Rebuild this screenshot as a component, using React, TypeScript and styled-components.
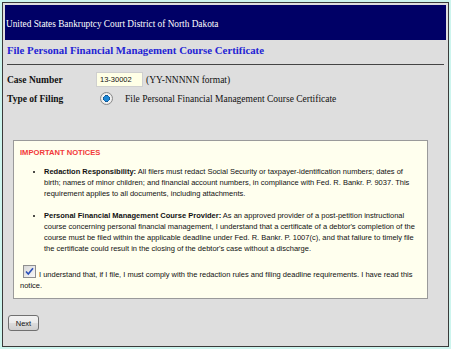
import React from "react";
import styled, { createGlobalStyle } from "styled-components";

const Global = createGlobalStyle`
  html, body { margin: 0; padding: 0; }
  body { background: #cdf5ee; width: 451px; height: 349px; overflow: hidden; }
`;

const Frame = styled.div`
  margin: 2px;
  border: 1px solid #3a3a3a;
  background: #dedede;
  padding: 2px 2px 0 2px;
  box-sizing: border-box;
  width: 447px;
  height: 345px;
  display: flex;
  flex-direction: column;
`;

const Header = styled.div`
  height: 35px;
  background: #000066;
  color: #fff;
  font-family: "Liberation Serif", serif;
  font-size: 9.3px;
  display: flex;
  align-items: center;
  padding-left: 1px;
  padding-top: 3px;
  box-sizing: border-box;
`;

const Title = styled.h1`
  margin: 3px 0 0 2px;
  font-family: "Liberation Serif", serif;
  font-size: 10.8px;
  font-weight: bold;
  color: #2424d4;
  line-height: 14px;
`;

const Rule = styled.hr`
  margin: 7px 2px 0 2px;
  border: none;
  border-top: 1px solid #444;
  height: 0;
`;

const FormGrid = styled.div`
  display: grid;
  grid-template-columns: 89px 1fr;
  row-gap: 5px;
  margin: 7px 0 0 2px;
  font-family: "Liberation Serif", serif;
  font-size: 9.5px;
  align-items: center;
`;

const Label = styled.div`
  font-weight: bold;
  color: #111;
`;

const Field = styled.div`
  display: flex;
  align-items: center;
  gap: 3px;
  color: #111;
`;

const TextInput = styled.div`
  width: 47px;
  height: 15px;
  box-sizing: border-box;
  background: #ffffe6;
  border: 1px solid #cfcfcf;
  font-family: "Liberation Sans", sans-serif;
  font-size: 7.5px;
  line-height: 13px;
  padding-left: 3px;
  color: #111;
`;

const Radio = styled.span`
  width: 11px;
  height: 11px;
  border-radius: 50%;
  border: 1px solid #8a8a8a;
  background: radial-gradient(circle, #1e88d6 0 2.6px, #0d4f8a 3.2px, #f4f4f4 3.6px, #dcdcdc 100%);
  margin: 0 9px 0 4px;
  flex: none;
`;

const Notice = styled.div`
  margin: 35px 18px 0 8px;
  background: #ffffee;
  border: 1px solid #9a9a9a;
  padding: 6px 9px 7px 6px;
  font-family: "Liberation Sans", sans-serif;
  font-size: 7.5px;
  line-height: 11px;
  color: #111;
`;

const NoticeHead = styled.div`
  color: #f23a3a;
  font-weight: bold;
  font-size: 7.6px;
`;

const List = styled.ul`
  margin: 8px 0 0 0;
  padding-left: 24px;
  list-style: disc;
`;

const Item = styled.li`
  margin-bottom: 11px;
`;

const Agree = styled.div`
  margin-top: 0;
`;

const Check = styled.span`
  display: inline-block;
  width: 11px;
  height: 11px;
  border: 1px solid #8f8f8f;
  background: linear-gradient(135deg, #d8d8d8, #f8f8f8);
  vertical-align: -1px;
  margin: 0 3px 0 3px;
  position: relative;
`;

const Next = styled.button`
  margin: 16px 0 0 3px;
  align-self: flex-start;
  width: 31px;
  height: 16px;
  border: 1px solid #707070;
  border-radius: 3px;
  background: linear-gradient(#f2f2f2, #ebebeb 50%, #dddddd 50%, #cfcfcf);
  font-family: "Liberation Sans", sans-serif;
  font-size: 7.5px;
  color: #111;
  padding: 0;
`;

export default function App() {
  return (
    <>
      <Global />
      <Frame>
        <Header>United States Bankruptcy Court District of North Dakota</Header>
        <Title>File Personal Financial Management Course Certificate</Title>
        <Rule />
        <FormGrid>
          <Label>Case Number</Label>
          <Field>
            <TextInput>13-30002</TextInput>
            <span>(YY-NNNNN format)</span>
          </Field>
          <Label>Type of Filing</Label>
          <Field>
            <Radio />
            <span>File Personal Financial Management Course Certificate</span>
          </Field>
        </FormGrid>
        <Notice>
          <NoticeHead>IMPORTANT NOTICES</NoticeHead>
          <List>
            <Item>
              <b>Redaction Responsibility:</b> All filers must redact Social Security or taxpayer-identification numbers; dates of birth; names of minor children; and financial account numbers, in compliance with Fed. R. Bankr. P. 9037. This requirement applies to all documents, including attachments.
            </Item>
            <Item>
              <b>Personal Financial Management Course Provider:</b> As an approved provider of a post-petition instructional course concerning personal financial management, I understand that a certificate of a debtor's completion of the course must be filed within the applicable deadline under Fed. R. Bankr. P. 1007(c), and that failure to timely file the certificate could result in the closing of the debtor's case without a discharge.
            </Item>
          </List>
          <Agree>
            <Check>
              <svg width="11" height="11" viewBox="0 0 11 11" style={{ position: "absolute", left: 0, top: 0 }}>
                <path d="M2 5.5 L4.3 8 L9 2.2" fill="none" stroke="#2a4fb8" strokeWidth="1.6" />
              </svg>
            </Check>
            I understand that, if I file, I must comply with the redaction rules and filing deadline requirements. I have read this notice.
          </Agree>
        </Notice>
        <Next>Next</Next>
      </Frame>
    </>
  );
}
